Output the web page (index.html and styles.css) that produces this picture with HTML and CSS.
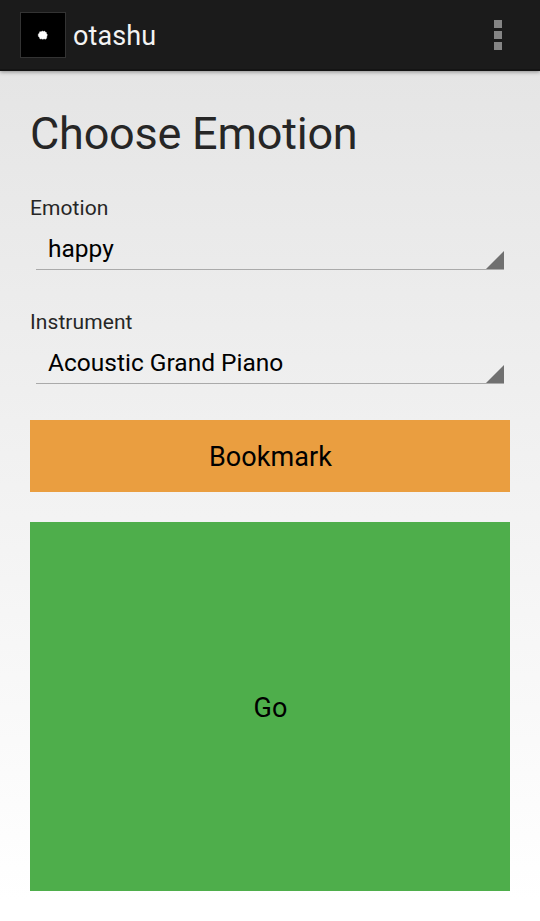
FILE: index.html
```html
<!DOCTYPE html>
<html lang="en">
<head>
<meta charset="utf-8">
<title>otashu</title>
<link rel="stylesheet" href="styles.css">
</head>
<body>
<header class="bar">
  <svg class="logo" width="46" height="46" viewBox="0 0 46 46"><rect x=".5" y=".5" width="45" height="45" fill="#000" stroke="#333"/><path d="M18.3 22l1.2-1 .2-1.3 1.5.1 1-.8 1.2.6 1.2-.5.6 1 1.2.4.1 1.3.9 1-.6 1.6-.2 1.9-1.2.9-1.3-.4-1.3.5-1.4-.5-1.4.2-.5-1.5-1.2-1.2z" fill="#fff" stroke="#fff" stroke-width=".4"/></svg>
  <span class="name">otashu</span>
  <svg class="more" width="8" height="30" viewBox="0 0 8 30" fill="#858585"><path d="M0 0h8v8H0zM0 11h8v8H0zM0 22h8v8H0z"/></svg>
</header>
<main class="content">
  <h1 class="title">Choose Emotion</h1>
  <label class="label">Emotion</label>
  <div class="spinner">happy<svg class="corner" width="18" height="18"><path d="M18 0v18H0z"/></svg></div>
  <label class="label second">Instrument</label>
  <div class="spinner">Acoustic Grand Piano<svg class="corner" width="18" height="18"><path d="M18 0v18H0z"/></svg></div>
  <button class="button bookmark">Bookmark</button>
  <button class="button go">Go</button>
</main>
</body>
</html>
```
FILE: styles.css
```css
* { box-sizing: border-box; }
body { margin: 0; height: 921px; display: flex; flex-direction: column; font-family: Roboto, sans-serif; color: #262626; background: linear-gradient(#e5e5e5 71px, #fff 900px); }
.bar { height: 71px; flex: none; display: flex; align-items: center; padding: 0 38px 0 20px; background: #1b1b1b; color: #f3f3f3; border-bottom: 2px solid #141414; box-shadow: 0 1px 4px #0006; }
.logo { margin-bottom: -1px; }
.name { margin: 2px 0 0 7px; font-size: 27px; letter-spacing: .1px; }
.more { margin-left: auto; margin-top: 1px; }
.content { flex: 1; display: flex; flex-direction: column; padding: 30px; }
.title { margin: 0; height: 64px; line-height: 66px; font-size: 45px; font-weight: 400; letter-spacing: -.22px; }
.label { margin-top: 30px; height: 26px; line-height: 26px; font-size: 21px; letter-spacing: .08px; }
.second { margin-top: 39px; }
.spinner { height: 49px; margin: 0 6px; padding: 0 0 0 12px; display: flex; border-bottom: 1px solid #aaa; font-size: 24.5px; line-height: 55px; color: #000; }
.corner { margin: auto 0 0 auto; fill: #707070; }
.button { border: 0; padding: 2px 0 0 1px; font: 27px Roboto, sans-serif; letter-spacing: .08px; color: #000; }
.bookmark { margin-top: 36px; height: 72px; background: #ea9e40; }
.go { margin-top: 30px; flex: 1; background: #4eae4b; }
```
